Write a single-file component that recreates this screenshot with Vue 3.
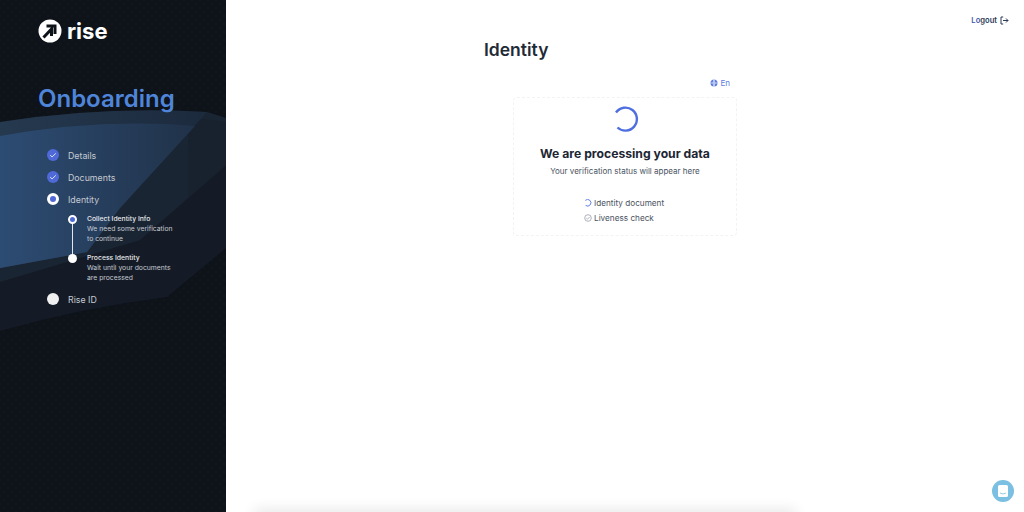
<script setup>
const steps = [
  { label: 'Details', state: 'done' },
  { label: 'Documents', state: 'done' },
  { label: 'Identity', state: 'active' },
  { label: 'Rise ID', state: 'todo' }
]

const subSteps = [
  { title: 'Collect Identity Info', lines: ['We need some verification', 'to continue'], active: true },
  { title: 'Process Identity', lines: ['Wait until your documents', 'are processed'], active: false }
]
</script>

<template>
  <div class="page">
    <aside class="sidebar">
      <svg class="waves" width="226" height="512" viewBox="0 0 226 512">
        <defs>
          <linearGradient id="blue" gradientUnits="userSpaceOnUse" x1="0" y1="0" x2="195" y2="0">
            <stop offset="0" stop-color="#2d4c73" />
            <stop offset="1" stop-color="#203249" />
          </linearGradient>
          <linearGradient id="band" gradientUnits="userSpaceOnUse" x1="0" y1="0" x2="207" y2="0">
            <stop offset="0" stop-color="#25394f" />
            <stop offset="1" stop-color="#1c2a3d" />
          </linearGradient>
        </defs>
        <!-- back to front: darkest sweep, right hand facet, top band, blue -->
        <path d="M0 122 Q105 106 207 112 L226 118 L226 248 L167 297 Q80 308 0 331 Z" fill="#141b26" />
        <path d="M0 282 L140 240 L226 165 L226 118 L207 112 L100 200 L0 268 Z" fill="#1a2533" />
        <path d="M188 117 L226 122 L226 165 L188 198 Z" fill="#18212e" />
        <path d="M0 122 Q105 106 207 112 L120 208 L87 252 L0 268 Z" fill="url(#band)" />
        <path d="M0 136 Q100 118 195 126 L120 208 L87 252 L0 268 Z" fill="url(#blue)" />
      </svg>

      <div class="logo">
        <svg width="24" height="24" viewBox="0 0 24 24">
          <circle cx="12" cy="12" r="11.5" fill="#fff" />
          <path d="M5.5 18.5 L13.5 10 L13.5 17 M8.5 7 H17 V15" fill="none" stroke="#0e1219" stroke-width="3" />
        </svg>
        <span class="logo-text">rise</span>
      </div>

      <h2 class="heading">Onboarding</h2>

      <ul class="steps">
        <template v-for="step in steps" :key="step.label">
          <li class="step">
            <span class="dot" :class="step.state">
              <svg v-if="step.state === 'done'" width="8" height="8" viewBox="0 0 8 8">
                <path d="M1.2 4.2 L3.1 5.9 L6.8 2.4" fill="none" stroke="#dfe4f7" stroke-width="1" />
              </svg>
            </span>
            <span class="step-label">{{ step.label }}</span>
          </li>
          <li v-if="step.state === 'active'" class="sub-steps">
            <div v-for="sub in subSteps" :key="sub.title" class="sub-step">
              <span class="sub-dot" :class="{ active: sub.active }"></span>
              <div class="sub-text">
                <div class="sub-title">{{ sub.title }}</div>
                <div v-for="line in sub.lines" :key="line">{{ line }}</div>
              </div>
            </div>
          </li>
        </template>
      </ul>
    </aside>

    <main class="main">
      <header class="topbar">
        <a class="logout">
          <span class="logout-text"><span class="lo">Lo</span>gout</span>
          <svg width="9" height="9" viewBox="0 0 9 9">
            <path d="M3.2 1 H1 V8 H3.2 M3 4.5 H8 M6 2.5 L8 4.5 L6 6.5" fill="none" stroke="#2b3a55" stroke-width="1" />
          </svg>
        </a>
      </header>

      <section class="content">
        <h1 class="title">Identity</h1>
        <div class="card-wrap">
          <div class="lang">
            <svg width="8" height="8" viewBox="0 0 8 8">
              <circle cx="4" cy="4" r="3.5" fill="#5c7be0" />
              <path d="M0.5 4 H7.5 M4 0.5 Q2 4 4 7.5 Q6 4 4 0.5" fill="none" stroke="#fff" stroke-width="0.6" />
            </svg>
            <span>En</span>
          </div>
          <div class="card">
            <svg class="spinner" width="28" height="28" viewBox="0 0 28 28">
              <path d="M5 7.5 A11.5 11.5 0 1 1 6.5 22.5" fill="none" stroke="#4f6fe0" stroke-width="2.4" />
            </svg>
            <h3 class="card-title">We are processing your data</h3>
            <p class="card-sub">Your verification status will appear here</p>
            <div class="checks">
              <div class="check">
                <svg width="8" height="8" viewBox="0 0 8 8">
                  <path d="M1.3 1.4 A3.3 3.3 0 1 1 1.6 6.4" fill="none" stroke="#4f6fe0" stroke-width="0.9" />
                </svg>
                <span>Identity document</span>
              </div>
              <div class="check">
                <svg width="8" height="8" viewBox="0 0 8 8">
                  <circle cx="4" cy="4" r="3.3" fill="none" stroke="#8b929c" stroke-width="0.7" />
                  <path d="M2.3 4.1 L3.5 5.2 L5.7 2.9" fill="none" stroke="#8b929c" stroke-width="0.7" />
                </svg>
                <span>Liveness check</span>
              </div>
            </div>
          </div>
        </div>
      </section>

      <div class="bottom-sheet"></div>

      <button class="chat">
        <svg width="10" height="12" viewBox="0 0 10 12">
          <rect x="0" y="0" width="10" height="12" rx="1.6" fill="#fff" />
          <path d="M2 8 Q5 10 8 8" fill="none" stroke="#7bbfe2" stroke-width="0.8" />
        </svg>
      </button>
    </main>
  </div>
</template>

<style>
html, body {
  margin: 0;
  background: #fff;
}
</style>

<style scoped>
.page {
  display: flex;
  width: 1024px;
  height: 512px;
  overflow: hidden;
  font-family: Inter, "Liberation Sans", sans-serif;
  color: #1d2633;
}

.sidebar {
  position: relative;
  width: 226px;
  flex-shrink: 0;
  box-sizing: border-box;
  padding: 19px 0 0 38px;
  background-color: #0e1219;
  background-image: radial-gradient(#141a23 0.6px, transparent 0.8px), radial-gradient(#141a23 0.6px, transparent 0.8px);
  background-size: 8px 8px;
  background-position: 0 0, 4px 4px;
}

.waves {
  position: absolute;
  left: 0;
  top: 0;
}

.logo,
.heading,
.steps {
  position: relative;
}

.logo {
  display: flex;
  align-items: center;
  gap: 5px;
  height: 24px;
}

.logo-text {
  font-size: 22px;
  font-weight: 700;
  line-height: 24px;
  color: #fff;
}

.heading {
  margin: 41px 0 0;
  font-size: 24px;
  line-height: 30px;
  font-weight: 600;
  color: #4f85d8;
}

.steps {
  list-style: none;
  margin: 30px 0 0 9px;
  padding: 0;
}

.step {
  display: flex;
  align-items: center;
  gap: 9px;
  height: 22px;
  font-size: 8.8px;
  color: #c5cad2;
}

.dot {
  display: flex;
  align-items: center;
  justify-content: center;
  box-sizing: border-box;
  width: 12px;
  height: 12px;
  border-radius: 50%;
  flex-shrink: 0;
}

.dot.done {
  background: #4f69d8;
}

.dot.active {
  background: #4f69d8;
  border: 3.5px solid #fff;
}

.dot.todo {
  background: #f0f0f0;
}

.sub-steps {
  display: flex;
  flex-direction: column;
  gap: 9px;
  height: 78px;
  box-sizing: border-box;
  padding: 4px 0 0 21px;
}

.sub-step {
  position: relative;
  height: 30px;
  padding-left: 19px;
  font-size: 6.8px;
  line-height: 10px;
  color: #c5cad2;
}

.sub-step:first-child::after {
  content: "";
  position: absolute;
  left: 3.5px;
  top: 5px;
  width: 1.5px;
  height: 39px;
  background: #e4e6ea;
}

.sub-dot {
  position: absolute;
  z-index: 1;
  left: 0;
  top: 0.5px;
  box-sizing: border-box;
  width: 9px;
  height: 9px;
  border-radius: 50%;
  background: #fff;
}

.sub-dot.active {
  background: #4f69d8;
  border: 2.5px solid #fff;
}

.sub-title {
  color: #e6e8ec;
  font-weight: 500;
}

.main {
  position: relative;
  flex: 1;
  min-width: 0;
  background: #fff;
}

.topbar {
  display: flex;
  justify-content: flex-end;
  padding: 15px 15px 0 0;
}

.logout {
  display: flex;
  align-items: center;
  gap: 3px;
  height: 10px;
  font-size: 7.6px;
  font-weight: 600;
  color: #2b3a55;
}

.lo {
  color: #3f5aa8;
}

.content {
  width: 282px;
  margin: 0 auto;
}

.title {
  margin: 14px 0 0;
  font-size: 17.5px;
  line-height: 22px;
  font-weight: 600;
  color: #1f2a37;
}

.card-wrap {
  width: 224px;
  margin: 17px 0 0 29px;
}

.lang {
  display: flex;
  align-items: center;
  justify-content: flex-end;
  gap: 2px;
  height: 10px;
  margin: 0 7px 9px 0;
  font-size: 8px;
  color: #5c7be0;
}

.card {
  display: flex;
  flex-direction: column;
  align-items: center;
  box-sizing: border-box;
  height: 139px;
  padding-top: 7px;
  border: 1px dashed #f3f3f5;
  border-radius: 4px;
}

.spinner {
  display: block;
}

.card-title {
  margin: 13px 0 0;
  font-size: 12.2px;
  line-height: 16px;
  font-weight: 700;
  color: #1d2633;
}

.card-sub {
  margin: 3px 0 0;
  font-size: 8px;
  line-height: 12px;
  color: #4a5361;
}

.checks {
  display: flex;
  flex-direction: column;
  gap: 5px;
  margin-top: 21px;
  align-self: flex-start;
  margin-left: 70px;
}

.check {
  display: flex;
  align-items: center;
  gap: 2px;
  height: 10px;
  font-size: 8.2px;
  color: #4a5361;
}

.bottom-sheet {
  position: absolute;
  left: 34px;
  bottom: -20px;
  width: 530px;
  height: 20px;
  margin-bottom: -3px;
  background: #e9e9e9;
  box-shadow: 0 0 14px 6px rgba(0, 0, 0, 0.09);
}

.chat {
  position: absolute;
  right: 10px;
  bottom: 10px;
  display: flex;
  align-items: center;
  justify-content: center;
  width: 22px;
  height: 22px;
  padding: 0;
  border: none;
  border-radius: 50%;
  background: #7bbfe2;
}
</style>
